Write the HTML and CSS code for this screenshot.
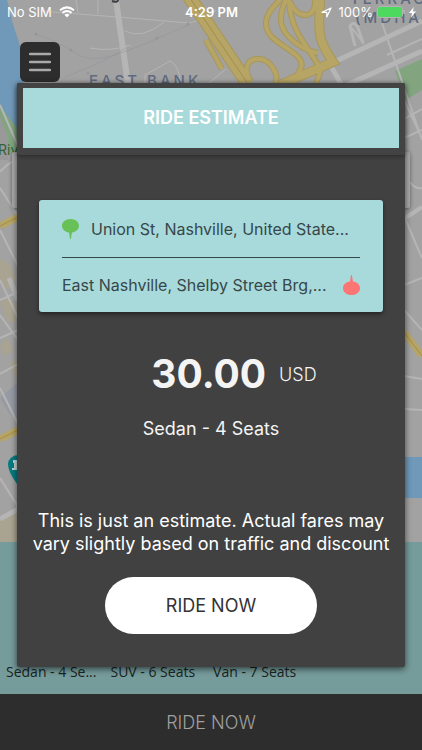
FILE: index.html
```html
<!DOCTYPE html>
<html lang="en">
<head>
<meta charset="utf-8">
<meta name="viewport" content="width=device-width, initial-scale=1">
<title>Ride Estimate</title>
<link rel="stylesheet" href="styles.css">
</head>
<body>
<div class="screen">
  <section class="map">
    <svg class="map-art" viewBox="0 0 422 542" preserveAspectRatio="xMidYMin slice" aria-hidden="true">
      <rect width="422" height="542" fill="#a2a2a2"/>
      <path fill="#7098b8" d="M0 0H7L13 24L21 49L24 90V150L0 110Z"/>
      <path fill="#82a580" d="M0 104Q10 122 24 134V155H12L0 138Z"/>
      <path fill="#999" d="M0 116L8 138V160H0Z"/>
      <path fill="#82a580" d="M395 71L422 59V90L406 100Z"/>
      <path fill="#7098b8" d="M390 457H422V498H390Z"/>
      <path fill="#a9a392" d="M0 258L10 264L16 280L8 290L0 282ZM0 302L8 296L18 308V320L8 323ZM0 346L7 338L13 350L4 356ZM8 364L18 358V380ZM0 520L20 512V542H0Z"/>
      <path fill="#969ba3" d="M0 398L18 382V422L8 412Z"/>
      <g fill="none" stroke="#b5b5b5" stroke-width="2">
        <path stroke-width="1" d="M76 0L78 13M98 0V14M40 11L130 18L189 23Q205 20 216 10M125 31Q142 40 164 22M90 48Q110 52 131 45M145 85V75L170 61Q178 64 181 83M208 84L226 69"/>
        <path stroke-width="6" d="M116 0L128 84"/>
        <path stroke-width="5" d="M334 62L422 21M340 88L422 51M330 64L342 86"/>
        <path d="M352 28L364 44M382 23L422 140M387 55L422 39M404 100L422 138M404 119L422 109M404 138L422 130M404 172Q412 190 422 188M404 216L422 258M404 285L422 278M404 310L422 330M404 376L422 379M404 409L422 410"/>
        <path stroke-width="4" d="M404 219L422 207"/>
        <path d="M0 105L18 146M0 172Q8 162 18 160M0 188L18 216M0 230L18 266M0 280L18 318M0 315L18 340M0 374L18 364M0 338L18 330M0 388L18 424M0 478L20 510M0 300L18 292"/>
        <path stroke-width="5" d="M0 519L20 508M9 278L18 300"/>
        <path stroke-width="3" d="M355 46L350 26Q354 20 358 28L363 43"/>
      </g>
      <g fill="none" stroke="#8e8e98" stroke-width="1" opacity=".4">
        <path d="M35 34Q55 40 72 51Q88 64 115 55T190 24M65 77Q105 62 126 48"/>
      </g>
      <g fill="#95959d"><circle cx="36" cy="34" r="1.5"/><circle cx="71" cy="50" r="1.5"/><circle cx="157" cy="38" r="1.5"/><circle cx="188" cy="24" r="1.5"/><circle cx="88" cy="73" r="1.5"/></g>
      <g fill="none">
        <g stroke="#a8975a" stroke-width="6">
          <path d="M280 0C265 14 262 25 271 36S309 56 300 70L292 84"/>
          <path d="M286 0Q275 22 288 36T318 53"/>
          <path d="M289 0Q290 25 306 46L321 69Q319 76 316 84"/>
          <path d="M290 2Q296 16 307 15Q316 12 315 0"/>
          <path d="M249 80C243 64 250 58 260 59S280 74 275 84"/>
          <path d="M206 40L222 69"/>
          <path stroke-width="10" d="M320 0C319 32 316 37 333 62L280 85"/>
          <path stroke-width="14" d="M188 -5L248 84"/>
        </g>
        <g stroke="#b7a566" stroke-width="4">
          <path d="M280 0C265 14 262 25 271 36S309 56 300 70L292 84"/>
          <path d="M286 0Q275 22 288 36T318 53"/>
          <path d="M289 0Q290 25 306 46L321 69Q319 76 316 84"/>
          <path d="M290 2Q296 16 307 15Q316 12 315 0"/>
          <path d="M249 80C243 64 250 58 260 59S280 74 275 84"/>
          <path d="M206 40L222 69"/>
          <path stroke-width="8" d="M320 0C319 32 316 37 333 62L280 85"/>
          <path stroke-width="12" d="M188 -5L248 84"/>
        </g>
        <path stroke="#a28f4d" stroke-width="1" d="M188 -5L248 84"/>
        <path stroke="#b7a566" stroke-width="7" d="M0 226L18 217M0 439L18 430M404 332L422 356"/>
        <path stroke="#a28f4d" d="M0 226L18 217M0 439L18 430M404 332L422 356"/>
      </g>
      <path fill="none" stroke="#3d4145" stroke-width="2" d="M112 1Q118 3 118 0"/>
      <g class="map-label">
        <text x="89" y="86">EAST BANK</text>
        <text x="350" y="4">TERRACE</text>
        <text x="355" y="23">(MDHA)</text>
      </g>
      <text class="map-river" x="-2" y="155">River</text>
      <path fill="#087b80" d="M17 484Q8 472 8 464A10 9 0 0 1 28 464Q27 474 17 484Z"/>
      <path fill="#c4d7d8" d="M12 468H14V463H13V460H18V470H12Z"/>
    </svg>
    <div class="search-panel"></div>
  </section>

  <section class="vehicles">
    <span class="vehicle">Sedan - 4 Se...</span>
    <span class="vehicle">SUV - 6 Seats</span>
    <span class="vehicle">Van - 7 Seats</span>
  </section>
  <button class="ride-bar" type="button">RIDE NOW</button>

  <div class="overlay">
    <header class="status">
      <div class="status-left">
        <span>No SIM</span>
        <svg width="16" height="12" viewBox="0 0 16 12" aria-hidden="true"><g fill="none" stroke="#fff" stroke-width="2"><path d="M1 4.2Q8-1.5 15 4.2M3.4 6.9Q8 3.2 12.6 6.9"/></g><path fill="#fff" d="M5.4 8.8Q8 6.9 10.6 8.8L8 11.5Z"/></svg>
      </div>
      <span class="clock">4:29 PM</span>
      <div class="status-right">
        <svg class="locate" width="11" height="11" viewBox="0 0 11 11" aria-hidden="true"><path d="M1 5.3L10 1L5.8 10V5.3Z" fill="none" stroke="#fff" stroke-width="1.2" stroke-linejoin="round"/></svg>
        <span>100%</span>
        <svg width="28" height="12" viewBox="0 0 28 12" aria-hidden="true"><rect x=".5" y=".5" width="25" height="11" rx="2.5" fill="none" stroke="#b4b4b4"/><rect x="1" y="1" width="24" height="10" rx="2" fill="#4cd95e"/><path d="M27 4V8" stroke="#b4b4b4" stroke-width="1.5"/></svg>
        <svg width="7" height="11" viewBox="0 0 7 11" aria-hidden="true"><path d="M4.8 0L0 6H3L1.8 11L7 4.6H3.8Z" fill="#fff"/></svg>
      </div>
    </header>
    <button class="menu" type="button" aria-label="Menu">
      <svg width="22" height="20" viewBox="0 0 22 20" aria-hidden="true"><path d="M1 2H21M1 10H21M1 18H21" stroke="#aaa" stroke-width="2.4" stroke-linecap="round"/></svg>
    </button>
    <main class="dialog">
      <div class="dialog-head"><h1>RIDE ESTIMATE</h1></div>
      <div class="dialog-body">
        <div class="route">
          <div class="stop">
            <svg width="17" height="20" viewBox="0 0 17 20" aria-hidden="true"><path fill="#67c157" d="M8.500 0C13.500 0 17 3 17 6.800C17 10.500 14 13 10 13.500L8.800 20H8L7 13.500C3 13 0 10.500 0 6.800C0 3 3.500 0 8.500 0Z"/></svg>
            <span>Union St, Nashville, United State...</span>
          </div>
          <div class="stop">
            <span>East Nashville, Shelby Street Brg,...</span>
            <svg width="17" height="20" viewBox="0 0 17 20" aria-hidden="true"><path fill="#fc7575" d="M8.500 20C13.500 20 17 17 17 13.200C17 9.500 14 7 10 6.500L8.800 0H8L7 6.500C3 7 0 9.500 0 13.200C0 17 3.500 20 8.500 20Z"/></svg>
          </div>
        </div>
        <div class="fare"><strong>30.00</strong><span>USD</span></div>
        <p class="type">Sedan - 4 Seats</p>
        <p class="note">This is just an estimate. Actual fares may<br>vary slightly based on traffic and discount</p>
        <button class="ride-now" type="button">RIDE NOW</button>
      </div>
    </main>
  </div>
</div>
</body>
</html>
```
FILE: styles.css
```css
* { box-sizing: border-box; }

body {
  margin: 0;
  font-family: Inter, "Liberation Sans", sans-serif;
  color: #fff;
}

h1, p { margin: 0; font-weight: 400; }

button { border: 0; padding: 0; font: inherit; }

svg { flex: none; display: block; }

.screen {
  position: relative;
  display: flex;
  flex-direction: column;
  min-height: 100vh;
  overflow: hidden;
}

/* Map and vehicle list behind the dialog */
.map {
  position: relative;
  flex: 1;
  background: #a2a2a2;
}

.map-art {
  position: absolute;
  inset: 0;
  width: 100%;
  height: 100%;
}

.map-label {
  font-size: 15px;
  font-weight: 500;
  letter-spacing: 3px;
  fill: #5f6a80;
}

.map-river { font-size: 14px; fill: #35623a; }

.search-panel {
  position: relative;
  height: 56px;
  margin: 152px 12px 0;
  border-radius: 2px;
  background: #a9a9a9;
  box-shadow: 0 1px 4px #0006;
}

.vehicles {
  display: flex;
  align-items: flex-end;
  gap: 14px;
  height: 152px;
  padding: 0 6px 12px;
  background: #759b9a;
  color: #182323;
  font: 14px/20px "Open Sans", "Noto Sans", sans-serif;
}

.vehicle { white-space: nowrap; }

.vehicle + .vehicle + .vehicle { margin-left: 4px; }

.ride-bar {
  height: 56px;
  background: #2d2d2d;
  color: #a0a0a0;
  font-size: 18px;
  font-weight: 300;
}

/* Foreground */
.overlay {
  position: absolute;
  inset: 0;
  display: flex;
  flex-direction: column;
}

.status {
  display: grid;
  grid-template-columns: 1fr auto 1fr;
  align-items: center;
  height: 24px;
  padding: 0 6px 0 7px;
  font-size: 13px;
}

.status-left, .status-right {
  display: flex;
  align-items: center;
  gap: 7px;
}

.status-right { justify-content: flex-end; gap: 4px; }

.locate { margin-right: 3px; }

.clock { font-weight: 600; }

.menu {
  display: grid;
  place-items: center;
  width: 40px;
  height: 40px;
  margin: 18px 0 0 20px;
  border-radius: 6px;
  background: #2d2d2d;
}

.dialog {
  display: flex;
  flex-direction: column;
  flex: 1;
  margin: 1px 17px 83px;
  border-radius: 2px;
  background: #414141;
  box-shadow: 0 2px 6px #0009;
}

.dialog-head {
  padding: 5px 6px 7px;
  border-radius: 2px;
  background: #434343;
  box-shadow: 0 1px 4px #0006;
}

.dialog-head h1 {
  background: #a8dadb;
  font-size: 18px;
  font-weight: 600;
  line-height: 60px;
  text-align: center;
}

.dialog-body {
  display: flex;
  flex-direction: column;
  align-items: center;
  flex: 1;
  padding: 45px 0 33px;
  text-align: center;
}

.route {
  align-self: stretch;
  margin: 0 22px;
  padding: 0 23px;
  border-radius: 3px;
  background: #a8dadb;
  color: #37474a;
  font-size: 16px;
  box-shadow: 0 2px 4px #0007;
}

.stop {
  display: flex;
  align-items: center;
  gap: 12px;
  height: 54px;
  white-space: nowrap;
}

.stop:first-child { height: 58px; border-bottom: 1px solid #37474a; }

.stop:last-child { justify-content: space-between; }

.fare {
  display: flex;
  align-items: center;
  gap: 13px;
  margin: 36px 0 0 46px;
  color: #f4f4f4;
}

.fare strong { font-size: 39px; line-height: 52px; }

.fare span { font-size: 18px; font-weight: 300; }

.type {
  margin-top: 17px;
  font-size: 18px;
  line-height: 24px;
  color: #f4f4f4;
}

.note {
  margin-top: 68px;
  font-size: 18px;
  line-height: 23px;
  white-space: nowrap;
}

.ride-now {
  width: 212px;
  height: 57px;
  margin-top: auto;
  border-radius: 29px;
  background: #fff;
  color: #333;
  font-size: 18px;
}
```
